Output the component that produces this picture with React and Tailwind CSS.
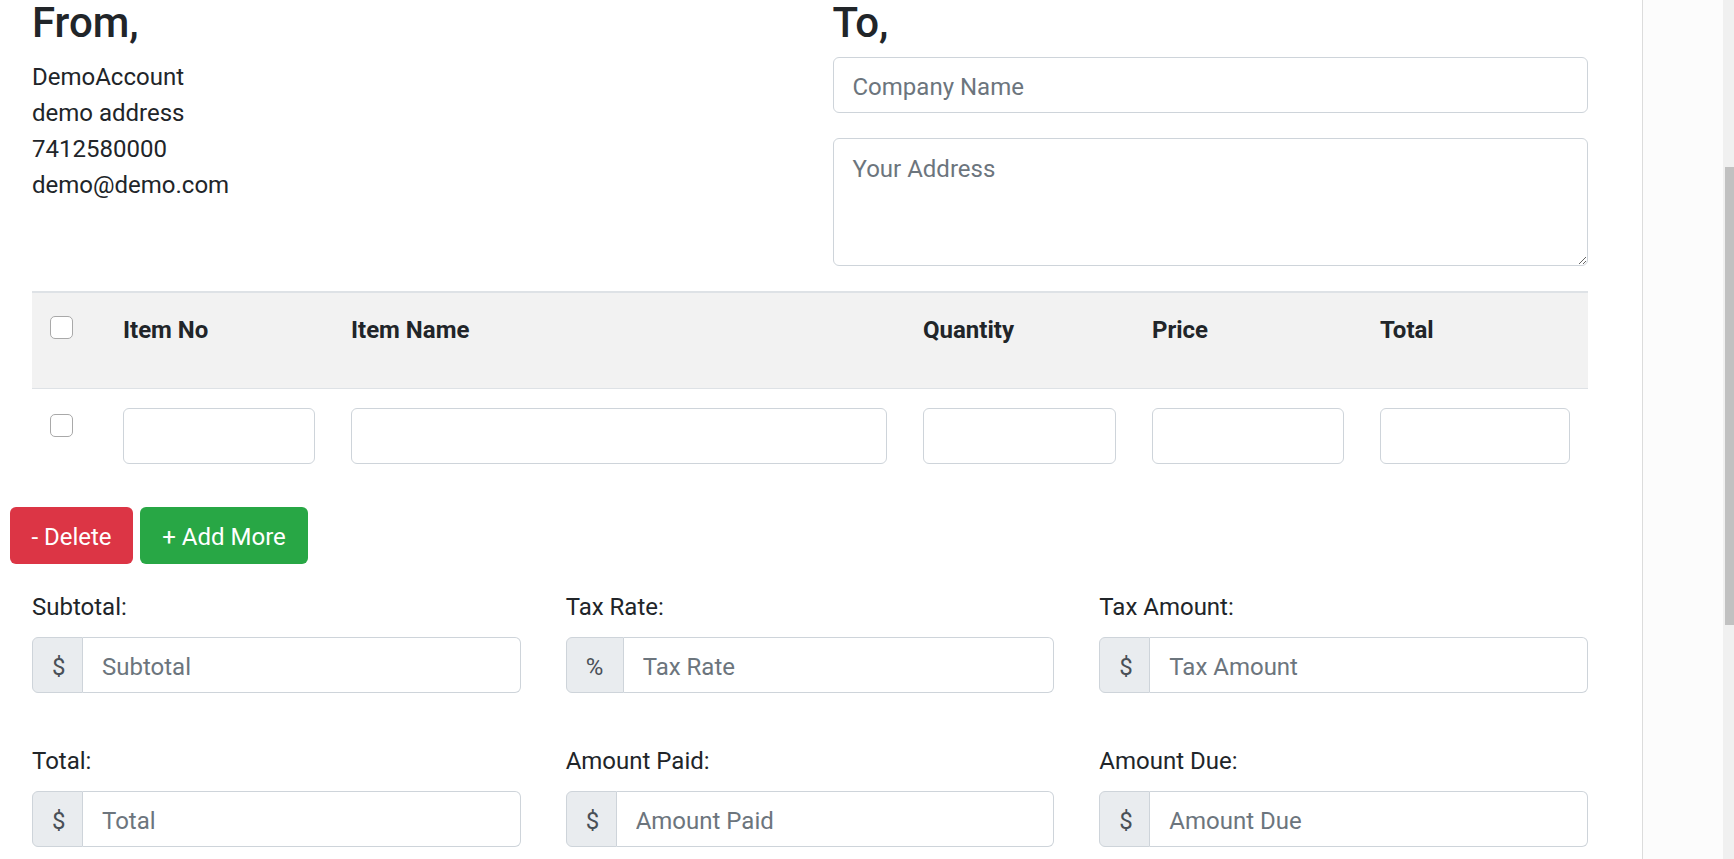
import React from 'react';

const Checkbox = ({ className = '' }) => (
    <div className={`w-[23px] h-[23px] rounded-[5px] border border-[#a9a9a9] bg-white ${className}`} />
);

const TextInput = ({ placeholder = '', className = '' }) => (
    <input
        type="text"
        placeholder={placeholder}
        className={`h-[56px] w-full rounded-[6px] border border-[#ced4da] bg-white pl-[19px] pr-[18px] pt-[3px] text-[24px] text-[#495057] placeholder:text-[#6c757d] outline-none ${className}`}
    />
);

const AmountField = ({ label, symbol, placeholder, symbolWidth = 'w-[51px]' }) => (
    <div>
        <label className="block h-[36px] text-[24px] leading-[36px] text-[#212529]">{label}</label>
        <div className="mt-[12px] flex h-[56px]">
            <span className={`${symbolWidth} flex shrink-0 items-center rounded-l-[6px] border border-[#ced4da] bg-[#e9ecef] pl-[19px] pt-[3px] text-[24px] text-[#495057]`}>
                {symbol}
            </span>
            <input
                type="text"
                placeholder={placeholder}
                className="h-full min-w-0 flex-1 rounded-r-[6px] border border-l-0 border-[#ced4da] bg-white pl-[19px] pt-[3px] text-[24px] text-[#495057] placeholder:text-[#6c757d] outline-none"
            />
        </div>
    </div>
);

const columns = ['Item No', 'Item Name', 'Quantity', 'Price', 'Total'];

const App = () => {
    return (
        <div className="flex h-[859px] overflow-hidden bg-white font-['Roboto',_sans-serif] text-[#212529]">
            {/* main invoice form */}
            <main className="w-[1642px] shrink-0 pl-[32px] pr-[54px]">
                <div className="grid grid-cols-2 gap-x-[45px]">
                    <div>
                        <h3 className="h-[46px] text-[42px] font-medium leading-[46px]">From,</h3>
                        <div className="mt-[13px] text-[24px] leading-[36px]">
                            <div>DemoAccount</div>
                            <div>demo address</div>
                            <div>7412580000</div>
                            <div>demo@demo.com</div>
                        </div>
                    </div>
                    <div>
                        <h3 className="h-[46px] text-[42px] font-medium leading-[46px]">To,</h3>
                        <TextInput placeholder="Company Name" className="mt-[11px]" />
                        <textarea
                            placeholder="Your Address"
                            className="mt-[25px] block h-[128px] w-full rounded-[6px] border border-[#ced4da] bg-white pl-[19px] pr-[18px] pt-[12px] text-[24px] leading-[36px] text-[#495057] placeholder:text-[#6c757d] outline-none"
                        />
                    </div>
                </div>

                {/* items table */}
                <div className="mt-[25px]">
                    <div className="grid h-[98px] grid-cols-[73px_228px_572px_229px_228px_1fr] border-t-2 border-b border-[#dee2e6] bg-[#f2f2f2]">
                        <div className="px-[18px] pt-[23px]">
                            <Checkbox />
                        </div>
                        {columns.map((col) => (
                            <div key={col} className="px-[18px] pt-[19px] text-[24px] font-bold leading-[36px]">
                                {col}
                            </div>
                        ))}
                    </div>
                    <div className="grid grid-cols-[73px_228px_572px_229px_228px_1fr] pt-[19px] pb-[18px]">
                        <div className="px-[18px] pt-[6px]">
                            <Checkbox />
                        </div>
                        {columns.map((col) => (
                            <div key={col} className="px-[18px]">
                                <TextInput />
                            </div>
                        ))}
                    </div>
                </div>

                <div className="ml-[-22px] mt-[25px] flex gap-[7px]">
                    <button className="h-[57px] w-[123px] rounded-[6px] bg-[#dc3545] pt-[2px] text-[24px] text-white">- Delete</button>
                    <button className="h-[57px] w-[168px] rounded-[6px] bg-[#28a745] pt-[2px] text-[24px] text-white">+ Add More</button>
                </div>

                {/* totals */}
                <div className="mt-[25px] grid grid-cols-3 gap-x-[45px] gap-y-[50px]">
                    <AmountField label="Subtotal:" symbol="$" placeholder="Subtotal" />
                    <AmountField label="Tax Rate:" symbol="%" placeholder="Tax Rate" symbolWidth="w-[58px]" />
                    <AmountField label="Tax Amount:" symbol="$" placeholder="Tax Amount" />
                    <AmountField label="Total:" symbol="$" placeholder="Total" />
                    <AmountField label="Amount Paid:" symbol="$" placeholder="Amount Paid" />
                    <AmountField label="Amount Due:" symbol="$" placeholder="Amount Due" />
                </div>
            </main>

            {/* right side panel */}
            <aside className="w-[81px] shrink-0 border-l border-[#dcdcdc] bg-[#fcfcfc]" />

            {/* page scrollbar */}
            <div className="w-[11px] shrink-0 bg-[#f0f0f0] pl-[2px] pt-[167px]">
                <div className="h-[458px] bg-[#c1c1c1]" />
            </div>
        </div>
    );
};

export default App;
